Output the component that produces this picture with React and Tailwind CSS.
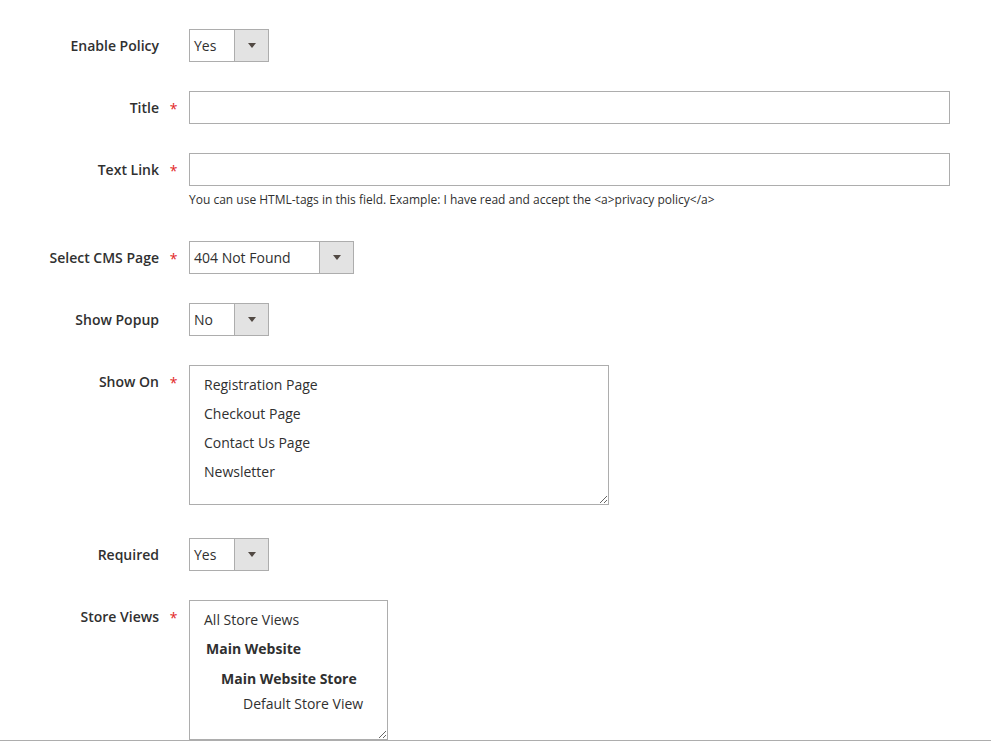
import React from "react";

const Arrow = () => (
  <svg width="8" height="5" viewBox="0 0 8 5">
    <path d="M0 0 H8 L4 5 Z" fill="#514943" />
  </svg>
);

const Select = ({ value, width }) => (
  <div
    className={`flex h-[33px] border border-[#adadad] bg-white ${width}`}
  >
    <div className="flex-1 pl-[4px] leading-[31px] text-[14px] text-[#303030]">
      {value}
    </div>
    <div className="flex w-[34px] items-center justify-center border-l border-[#adadad] bg-[#e3e3e3]">
      <Arrow />
    </div>
  </div>
);

const Row = ({ label, required, children, className = "" }) => (
  <div className={`flex items-start ${className}`}>
    <div className="w-[159px] shrink-0 text-right font-semibold leading-[33px] text-[#303030]">
      {label}
    </div>
    <div className="h-[33px] w-[29px] shrink-0 text-center leading-[35px] text-[#e22626]">
      {required ? "*" : ""}
    </div>
    <div className="ml-[1px]">{children}</div>
  </div>
);

export default function App() {
  return (
    <div className="min-h-screen bg-white font-['Open_Sans',sans-serif] text-[14px] text-[#303030]">
      <div className="border-b border-[#adadad] pt-[29px]">
        <Row label="Enable Policy" className="mb-[29px]">
          <Select value="Yes" width="w-[80px]" />
        </Row>

        <Row label="Title" required className="mb-[29px]">
          <div className="h-[33px] w-[761px] border border-[#adadad] bg-white" />
        </Row>

        <Row label="Text Link" required className="mb-[33px]">
          <div className="h-[33px] w-[761px] border border-[#adadad] bg-white" />
          <div className="mt-[5px] text-[12px] leading-[17px] text-[#303030]">
            You can use HTML-tags in this field. Example: I have read and accept the
            &lt;a&gt;privacy policy&lt;/a&gt;
          </div>
        </Row>

        <Row label="Select CMS Page" required className="mb-[29px]">
          <Select value="404 Not Found" width="w-[165px]" />
        </Row>

        <Row label="Show Popup" className="mb-[29px]">
          <Select value="No" width="w-[80px]" />
        </Row>

        <Row label="Show On" required className="mb-[33px]">
          <div className="h-[140px] w-[420px] resize overflow-auto border border-[#adadad] bg-white pt-[4px] pl-[14px]">
            {["Registration Page", "Checkout Page", "Contact Us Page", "Newsletter"].map(
              (item) => (
                <div key={item} className="leading-[29px]">
                  {item}
                </div>
              )
            )}
          </div>
        </Row>

        <Row label="Required" className="mb-[29px]">
          <Select value="Yes" width="w-[80px]" />
        </Row>

        <Row label="Store Views" required>
          <div className="h-[140px] w-[199px] resize overflow-auto border border-[#adadad] bg-white pt-[4px]">
            <div className="pl-[14px] leading-[29px]">All Store Views</div>
            <div className="pl-[16px] font-bold leading-[30px]">Main Website</div>
            <div className="pl-[31px] font-bold leading-[30px]">
              Main Website Store
            </div>
            <div className="pl-[53px] leading-[20px]">Default Store View</div>
          </div>
        </Row>
      </div>
    </div>
  );
}
